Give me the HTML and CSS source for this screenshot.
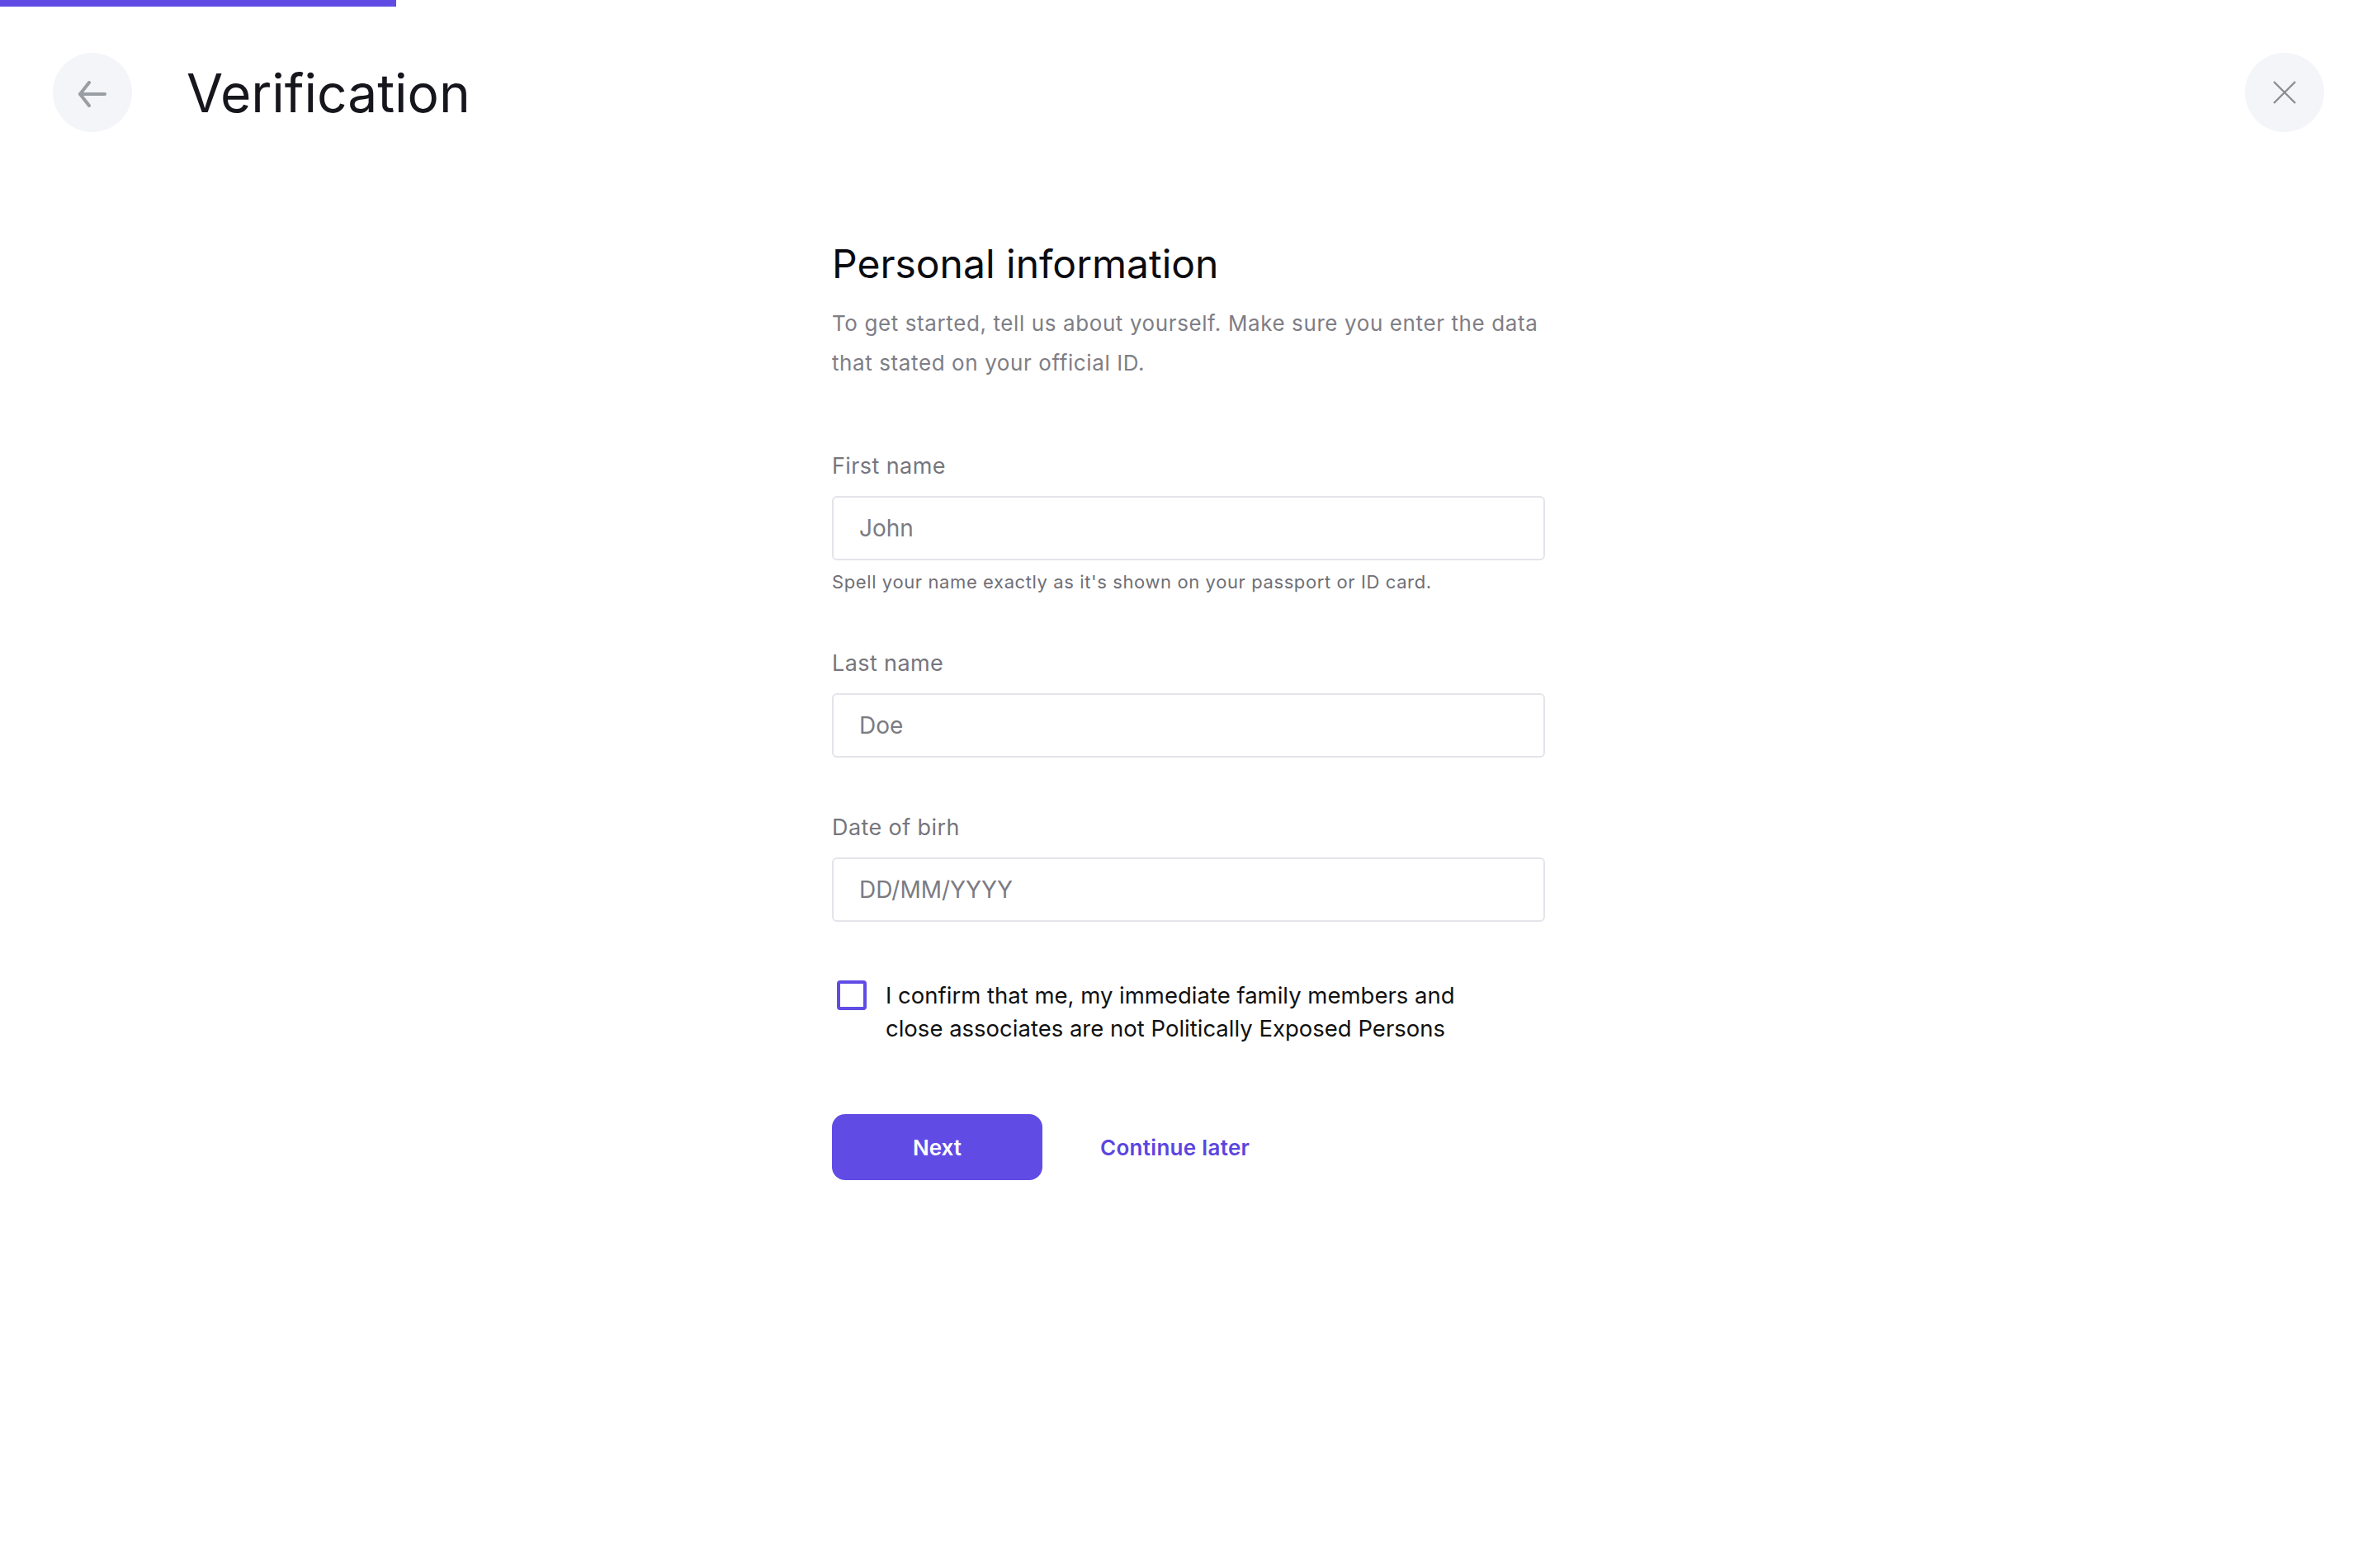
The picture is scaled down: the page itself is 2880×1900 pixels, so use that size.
FILE: index.html
```html
<!DOCTYPE html>
<html lang="en">
<head>
    <meta charset="UTF-8">
    <meta name="viewport" content="width=device-width, initial-scale=1.0">
    <title>Verification</title>
    <link rel="stylesheet" href="styles.css">
</head>
<body>
    <div class="progress"></div>

    <div class="header">
        <div class="header-left">
            <button class="round-btn" aria-label="Back">
                <svg class="back-icon" width="36" height="32" viewBox="0 0 36 32" fill="none" stroke="currentColor" stroke-width="4" stroke-linecap="round" stroke-linejoin="round">
                    <path d="M33 16H3"/>
                    <path d="M14 2L3 16l11 14"/>
                </svg>
            </button>
            <h1 class="page-title">Verification</h1>
        </div>
        <button class="round-btn" aria-label="Close">
            <svg width="28" height="28" viewBox="0 0 28 28" fill="none" stroke="currentColor" stroke-width="2.4">
                <path d="M1 1l26 26M27 1L1 27"/>
            </svg>
        </button>
    </div>

    <div class="form-section">
        <h2>Personal information</h2>
        <p class="intro">To get started, tell us about yourself. Make sure you enter the data that stated on your official ID.</p>

        <form id="personalForm">
            <div class="field">
                <label for="firstName">First name</label>
                <input type="text" id="firstName" placeholder="John" />
                <div class="hint">Spell your name exactly as it's shown on your passport or ID card.</div>
            </div>

            <div class="field">
                <label for="lastName">Last name</label>
                <input type="text" id="lastName" placeholder="Doe" />
            </div>

            <div class="field">
                <label for="birthDate">Date of birh</label>
                <input type="text" id="birthDate" placeholder="DD/MM/YYYY" />
            </div>

            <label class="confirm">
                <input type="checkbox" />
                <span class="box"></span>
                <span class="confirm-text">I confirm that me, my immediate family members and close associates are not Politically Exposed Persons</span>
            </label>

            <div class="actions">
                <button type="submit" class="next-btn">Next</button>
                <a href="#" class="later-link">Continue later</a>
            </div>
        </form>
    </div>
</body>
</html>
```

FILE: styles.css
```css
body {
  margin: 0;
  font-family: Inter, "Noto Sans", sans-serif;
  background-color: #fff;
  color: #111;
}

.progress {
  width: 480px;
  height: 8px;
  background-color: #604ce5;
}

/* Top bar */
.header {
  display: flex;
  justify-content: space-between;
  align-items: center;
  padding: 56px 64px 0;
}

.header-left {
  display: flex;
  align-items: center;
  gap: 66px;
}

.round-btn {
  width: 96px;
  height: 96px;
  border: none;
  border-radius: 50%;
  background-color: #f4f5f8;
  color: #999ea4;
  display: flex;
  align-items: center;
  justify-content: center;
  padding: 0;
  cursor: pointer;
}

.round-btn:last-child {
  color: #8c8c92;
}

.back-icon {
  margin-top: 3px;
}

.page-title {
  margin: 0;
  font-size: 64px;
  font-weight: 400;
  color: #16161d;
  line-height: normal;
}

/* Form column */
.form-section {
  width: 864px;
  margin: 132px auto 0;
}

.form-section h2 {
  margin: 0;
  font-size: 48px;
  line-height: 56px;
  font-weight: 400;
  color: #0b0b0f;
}

.intro {
  margin: 20px 0 0;
  font-size: 26px;
  letter-spacing: 0.6px;
  line-height: 48px;
  color: #7e7e86;
}

#personalForm {
  margin-top: 85px;
}

.field {
  margin-bottom: 69px;
}

.field label {
  display: block;
  font-size: 27px;
  letter-spacing: 0.4px;
  line-height: 32px;
  color: #76767d;
  margin-bottom: 20px;
}

.field input {
  display: block;
  width: 100%;
  height: 78px;
  box-sizing: border-box;
  padding: 0 31px;
  border: 2px solid #e4e4ea;
  border-radius: 6px;
  font-family: inherit;
  font-size: 28px;
  color: #333;
  outline: none;
}

.field input::placeholder {
  color: #7b7b82;
}

.hint {
  margin-top: 12px;
  font-size: 22px;
  letter-spacing: 0.6px;
  line-height: 28px;
  color: #6f6f76;
}

/* Checkbox row */
.confirm {
  display: flex;
  align-items: flex-start;
  gap: 23px;
  cursor: pointer;
}

.confirm input {
  display: none;
}

.confirm .box {
  flex: none;
  width: 36px;
  height: 36px;
  margin: 2px 0 0 6px;
  box-sizing: border-box;
  border: 4px solid #604ce5;
  border-radius: 4px;
}

.confirm-text {
  max-width: 720px;
  font-size: 27.5px;
  line-height: 40px;
  color: #111;
}

/* Buttons */
.actions {
  display: flex;
  align-items: center;
  gap: 70px;
  margin-top: 84px;
}

.next-btn {
  width: 255px;
  height: 80px;
  border: none;
  border-radius: 16px;
  background-color: #604ce5;
  color: #fff;
  font-family: inherit;
  font-size: 26px;
  font-weight: 600;
  cursor: pointer;
}

.later-link {
  font-size: 26px;
  letter-spacing: 0.3px;
  font-weight: 600;
  color: #5b45df;
  text-decoration: none;
}
```
